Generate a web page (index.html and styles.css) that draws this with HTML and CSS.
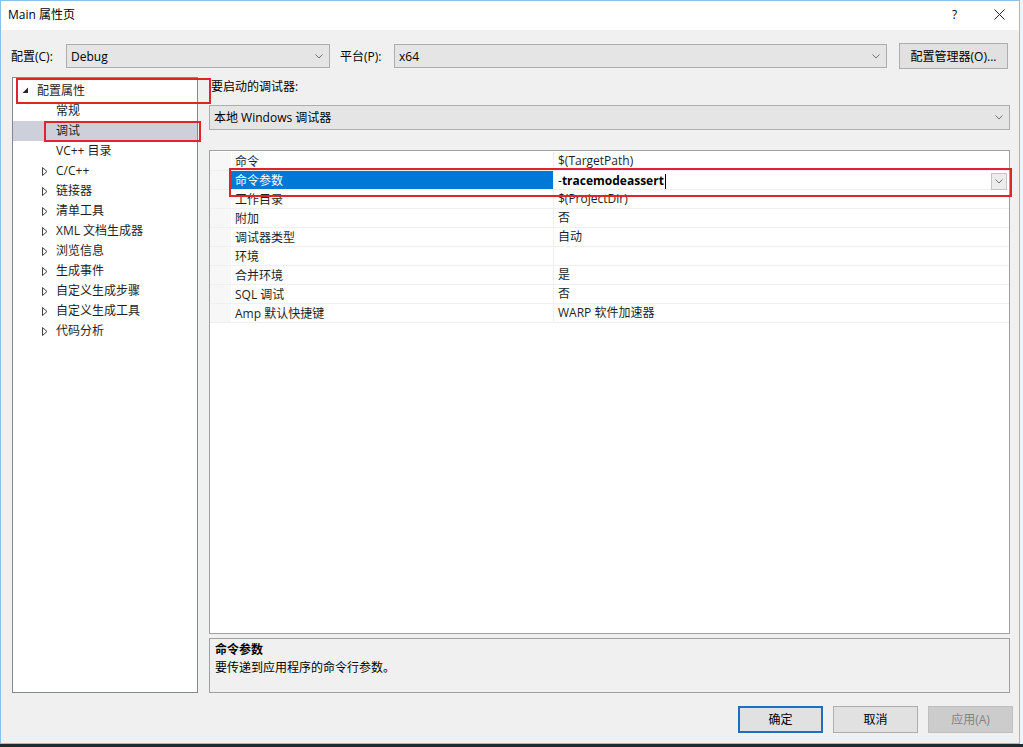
FILE: index.html
```html
<!DOCTYPE html>
<html lang="zh-CN">
<head>
<meta charset="utf-8">
<title>Main 属性页</title>
<link rel="stylesheet" href="styles.css">
</head>
<body>
<div class="window">
  <div class="titlebar">
    <span class="title">Main 属性页</span>
    <span class="help">?</span>
    <span class="close"><svg width="11" height="11" viewBox="0 0 11 11"><path d="M0.5 0.5L10.5 10.5M10.5 0.5L0.5 10.5" stroke="#222" stroke-width="1" fill="none"/></svg></span>
  </div>

  <div class="config-row">
    <span class="lbl lbl-config">配置(C):</span>
    <div class="combo combo-config"><span>Debug</span><svg class="chev" width="8" height="5" viewBox="0 0 8 5"><path d="M0.5 0.5L4 4L7.5 0.5" stroke="#707070" fill="none"/></svg></div>
    <span class="lbl lbl-platform">平台(P):</span>
    <div class="combo combo-platform"><span>x64</span><svg class="chev" width="8" height="5" viewBox="0 0 8 5"><path d="M0.5 0.5L4 4L7.5 0.5" stroke="#707070" fill="none"/></svg></div>
    <button class="btn btn-manager">配置管理器(O)...</button>
  </div>

  <div class="main">
    <div class="tree">
      <div class="node node-root"><svg class="exp" width="7" height="7" viewBox="0 0 7 7"><path d="M6 0.5L6 6L0.5 6Z" fill="#262626"/></svg><span>配置属性</span></div>
      <div class="node leaf">常规</div>
      <div class="node leaf selected">调试</div>
      <div class="node leaf">VC++ 目录</div>
      <div class="node child"><svg class="col" width="6" height="9" viewBox="0 0 6 9"><path d="M0.5 0.5L5 4.5L0.5 8.5Z" fill="none" stroke="#404040"/></svg><span>C/C++</span></div>
      <div class="node child"><svg class="col" width="6" height="9" viewBox="0 0 6 9"><path d="M0.5 0.5L5 4.5L0.5 8.5Z" fill="none" stroke="#404040"/></svg><span>链接器</span></div>
      <div class="node child"><svg class="col" width="6" height="9" viewBox="0 0 6 9"><path d="M0.5 0.5L5 4.5L0.5 8.5Z" fill="none" stroke="#404040"/></svg><span>清单工具</span></div>
      <div class="node child"><svg class="col" width="6" height="9" viewBox="0 0 6 9"><path d="M0.5 0.5L5 4.5L0.5 8.5Z" fill="none" stroke="#404040"/></svg><span>XML 文档生成器</span></div>
      <div class="node child"><svg class="col" width="6" height="9" viewBox="0 0 6 9"><path d="M0.5 0.5L5 4.5L0.5 8.5Z" fill="none" stroke="#404040"/></svg><span>浏览信息</span></div>
      <div class="node child"><svg class="col" width="6" height="9" viewBox="0 0 6 9"><path d="M0.5 0.5L5 4.5L0.5 8.5Z" fill="none" stroke="#404040"/></svg><span>生成事件</span></div>
      <div class="node child"><svg class="col" width="6" height="9" viewBox="0 0 6 9"><path d="M0.5 0.5L5 4.5L0.5 8.5Z" fill="none" stroke="#404040"/></svg><span>自定义生成步骤</span></div>
      <div class="node child"><svg class="col" width="6" height="9" viewBox="0 0 6 9"><path d="M0.5 0.5L5 4.5L0.5 8.5Z" fill="none" stroke="#404040"/></svg><span>自定义生成工具</span></div>
      <div class="node child"><svg class="col" width="6" height="9" viewBox="0 0 6 9"><path d="M0.5 0.5L5 4.5L0.5 8.5Z" fill="none" stroke="#404040"/></svg><span>代码分析</span></div>
    </div>

    <div class="right">
      <div class="debugger-label">要启动的调试器:</div>
      <div class="combo combo-debugger"><span>本地 Windows 调试器</span><svg class="chev" width="8" height="5" viewBox="0 0 8 5"><path d="M0.5 0.5L4 4L7.5 0.5" stroke="#707070" fill="none"/></svg></div>

      <div class="grid">
        <div class="prow"><div class="gutter"></div><div class="pname">命令</div><div class="pval">$(TargetPath)</div></div>
        <div class="prow active"><div class="gutter"></div><div class="pname">命令参数</div><div class="pval"><span class="edit">-<b>tracemodeassert</b><i class="caret"></i></span><span class="dd"><svg width="8" height="5" viewBox="0 0 8 5"><path d="M0.5 0.5L4 4L7.5 0.5" stroke="#707070" fill="none"/></svg></span></div></div>
        <div class="prow"><div class="gutter"></div><div class="pname">工作目录</div><div class="pval">$(ProjectDir)</div></div>
        <div class="prow"><div class="gutter"></div><div class="pname">附加</div><div class="pval">否</div></div>
        <div class="prow"><div class="gutter"></div><div class="pname">调试器类型</div><div class="pval">自动</div></div>
        <div class="prow"><div class="gutter"></div><div class="pname">环境</div><div class="pval"></div></div>
        <div class="prow"><div class="gutter"></div><div class="pname">合并环境</div><div class="pval">是</div></div>
        <div class="prow"><div class="gutter"></div><div class="pname">SQL 调试</div><div class="pval">否</div></div>
        <div class="prow"><div class="gutter"></div><div class="pname">Amp 默认快捷键</div><div class="pval">WARP 软件加速器</div></div>
      </div>

      <div class="desc">
        <div class="desc-title">命令参数</div>
        <div class="desc-text">要传递到应用程序的命令行参数。</div>
      </div>
    </div>
  </div>

  <div class="buttons">
    <button class="btn dlg default">确定</button>
    <button class="btn dlg">取消</button>
    <button class="btn dlg disabled">应用(A)</button>
  </div>

  <div class="mark mark-root"></div>
  <div class="mark mark-debug"></div>
  <div class="mark mark-args"></div>
</div>
<div class="taskbar"></div>
</body>
</html>
```

FILE: styles.css
```css
html, body {
  margin: 0;
  padding: 0;
}
body {
  width: 1023px;
  height: 747px;
  overflow: hidden;
  background: #eef5fa;
  font-family: "Open Sans", "Noto Sans CJK SC", sans-serif;
  font-size: 12px;
  color: #000;
}
.window {
  position: relative;
  box-sizing: border-box;
  width: 1020px;
  height: 744px;
  border: 1px solid #8fbfe3;
  background: #f0f0f0;
  display: flex;
  flex-direction: column;
}
.taskbar {
  height: 3px;
  background: #1d2a30;
}
.titlebar {
  height: 29px;
  background: #fff;
  display: flex;
  align-items: center;
  padding-left: 7px;
  box-sizing: border-box;
}
.title {
  flex: 1;
  line-height: 16px;
  margin-top: -2px;
}
.help {
  width: 12px;
  margin-right: 30px;
  margin-top: -2px;
  font-size: 12px;
}
.close {
  width: 11px;
  margin-right: 14px;
  display: flex;
  margin-top: -2px;
}
.config-row {
  margin-top: 13px;
  height: 26px;
  display: flex;
  align-items: center;
  padding-left: 10px;
}
.lbl {
  line-height: 16px;
  padding-top: 2px;
}
.lbl-config { width: 55px; }
.lbl-platform { width: 54px; margin-left: 10px; }
.combo {
  box-sizing: border-box;
  height: 24px;
  border: 1px solid #adadad;
  background: #e5e5e5;
  display: flex;
  align-items: center;
  padding-left: 4px;
  padding-right: 6px;
}
.combo span {
  flex: 1;
  line-height: 16px;
  padding-top: 2px;
}
.combo-config { width: 264px; }
.combo-platform { width: 493px; }
.btn {
  font-family: "Open Sans", "Noto Sans CJK SC", sans-serif;
  font-size: 12px;
  color: #000;
  background: #e1e1e1;
  border: 1px solid #adadad;
  box-sizing: border-box;
  padding: 0;
  line-height: 16px;
}
.btn-manager {
  width: 109px;
  height: 26px;
  margin-left: 12px;
  padding-top: 2px;
}
.main {
  margin-top: 8px;
  height: 616px;
  display: flex;
  padding-left: 11px;
}
.tree {
  box-sizing: border-box;
  width: 186px;
  height: 616px;
  border: 1px solid #828790;
  background: #fff;
  padding-top: 3px;
}
.node {
  height: 20px;
  display: flex;
  align-items: center;
  line-height: 16px;
  color: #1e1e1e;
}
.node-root { padding-left: 9px; }
.node-root .exp { margin-right: 8px; margin-top: -1px; }
.node.leaf { padding-left: 43px; }
.node.child { padding-left: 29px; }
.node.child .col { margin-right: 8px; }
.node.selected { background: #cdd0da; }
.right {
  margin-left: 11px;
  width: 801px;
  display: flex;
  flex-direction: column;
}
.debugger-label {
  height: 20px;
  line-height: 20px;
  padding-left: 2px;
}
.combo-debugger {
  margin-top: 8px;
  height: 25px;
  width: 801px;
}
.combo-debugger span {
  padding-top: 0;
}
.grid {
  margin-top: 20px;
  box-sizing: border-box;
  height: 484px;
  border: 1px solid #a0a0a0;
  background: #fff;
  padding-top: 1px;
}
.prow {
  height: 19px;
  display: flex;
  box-sizing: border-box;
  border-bottom: 1px solid #f0f0f0;
}
.gutter {
  width: 21px;
  background: #f7f7f7;
}
.pname {
  width: 318px;
  padding-left: 4px;
  line-height: 20px;
  height: 18px;
  border-right: 1px solid #f0f0f0;
  color: #1e1e1e;
}
.pval {
  flex: 1;
  padding-left: 4px;
  line-height: 20px;
  height: 18px;
  color: #1e1e1e;
  display: flex;
  align-items: center;
}
.prow.active .pname {
  background: #0078d7;
  color: #fff;
}
.prow.active .pval {
  padding-right: 2px;
}
.edit {
  flex: 1;
  color: #000;
  display: flex;
  align-items: center;
  padding-top: 2px;
}
.edit b { font-weight: 700; }
.caret {
  display: inline-block;
  width: 1px;
  height: 15px;
  background: #000;
  margin-left: 1px;
}
.dd {
  box-sizing: border-box;
  width: 16px;
  height: 17px;
  border: 1px solid #c4c4c4;
  background: #ececec;
  display: flex;
  align-items: center;
  justify-content: center;
  margin-top: 3px;
}
.desc {
  margin-top: 4px;
  box-sizing: border-box;
  height: 55px;
  border: 1px solid #a0a0a0;
  background: #f0f0f0;
  padding: 2px 5px 0;
}
.desc-title {
  font-weight: 700;
  line-height: 18px;
}
.desc-text {
  line-height: 18px;
}
.buttons {
  margin-top: 13px;
  display: flex;
  justify-content: flex-end;
  gap: 10px;
  padding-right: 6px;
}
.btn.dlg {
  width: 85px;
  height: 27px;
}
.btn.default {
  border: 2px solid #1f6fc0;
}
.btn.disabled {
  background: #cccccc;
  border-color: #bfbfbf;
  color: #838383;
}
.mark {
  position: absolute;
  border: 2px solid #e0242c;
  box-sizing: border-box;
}
.mark-root { left: 15px; top: 77px; width: 195px; height: 26px; }
.mark-debug { left: 43px; top: 120px; width: 157px; height: 21px; }
.mark-args { left: 228px; top: 167px; width: 783px; height: 29px; }
```
